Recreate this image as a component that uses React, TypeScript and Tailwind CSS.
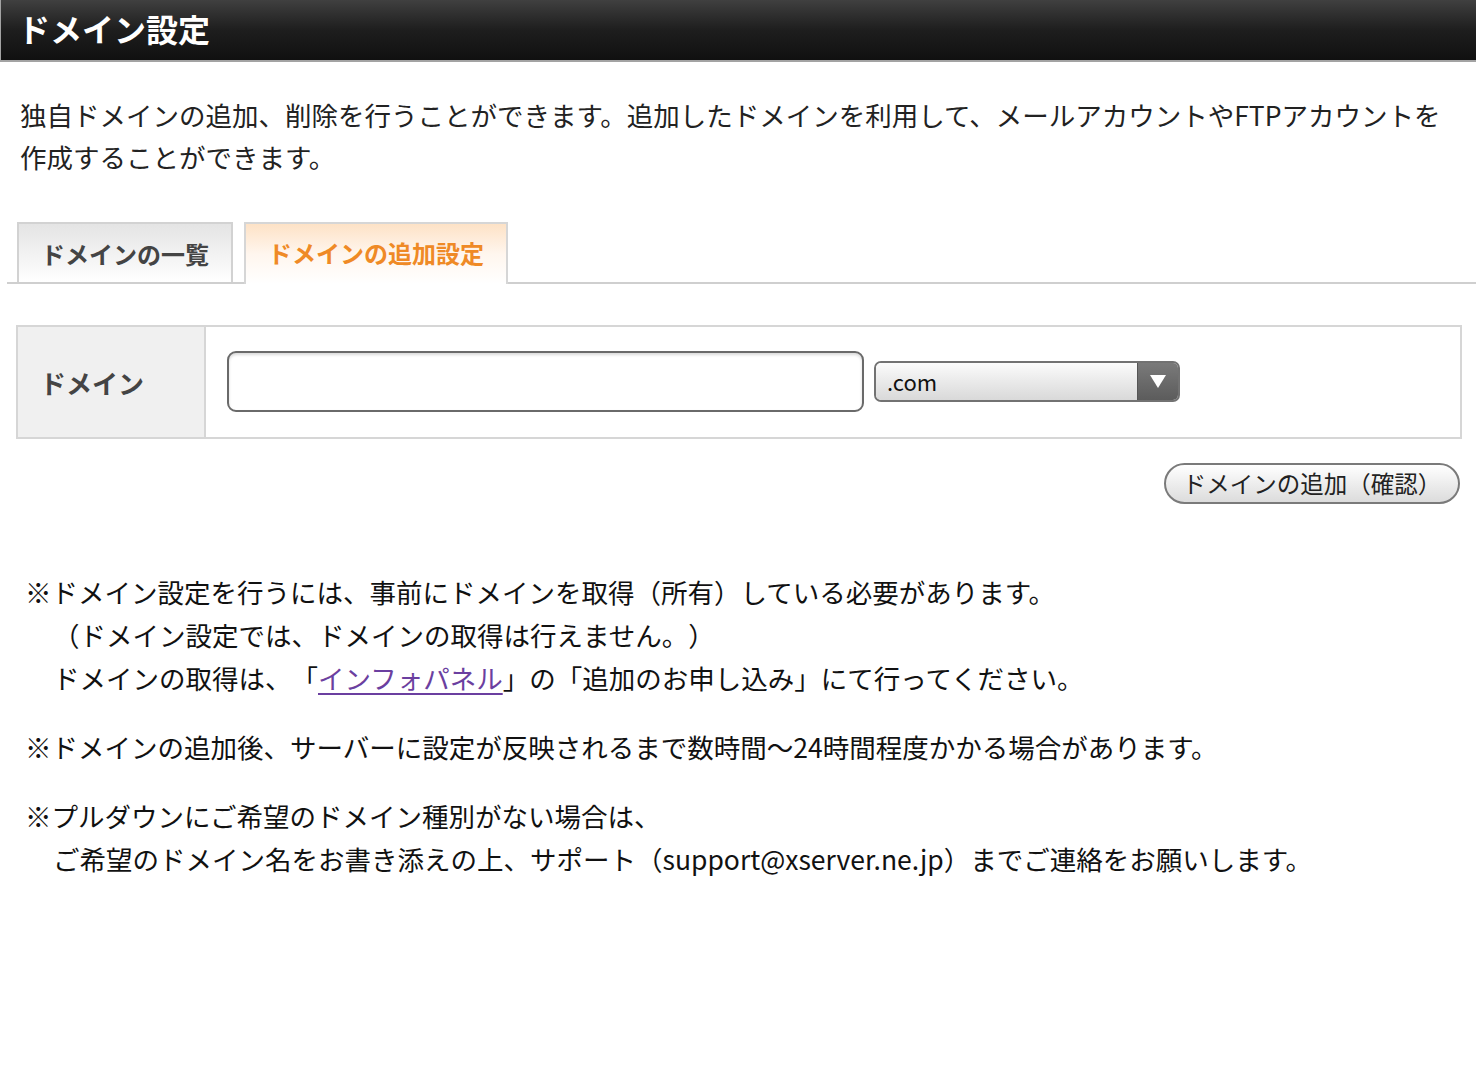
export default function App() {
    const jp = { fontFamily: '"Noto Sans CJK JP", "Noto Sans", sans-serif' };

    return (
        <div className="min-h-[1072px] w-[1476px] bg-white text-[#1a1a1a] [text-spacing-trim:space-all]" style={jp}>
            {/* header */}
            <div className="h-[62px] border-b-2 border-l border-[#a3a3a3] bg-gradient-to-b from-[#404040] via-[#1e1e1e] to-[#101010] pl-[17px] flex items-center">
                <h1 className="text-[32px] font-bold text-white leading-none pb-[4px]">ドメイン設定</h1>
            </div>

            {/* intro */}
            <p className="pl-[20px] pr-[20px] pt-[32px] text-[26.5px] leading-[42px] text-[#222]">
                独自ドメインの追加、削除を行うことができます。追加したドメインを利用して、メールアカウントやFTPアカウントを<br />作成することができます。
            </p>

            {/* tabs */}
            <div className="mt-[46px] ml-[7px] flex items-end border-b-2 border-[#cfcfcf] h-[60px]">
                <div className="ml-[10px] h-[60px] w-[216px] border-2 border-b-0 border-[#d2d2d2] bg-gradient-to-b from-[#e4e4e4] to-white flex items-center justify-center">
                    <span className="text-[24px] font-bold text-[#444] pt-[2px]">ドメインの一覧</span>
                </div>
                <div className="ml-[11px] -mb-[2px] h-[62px] w-[264px] border-2 border-b-0 border-[#d6d6d6] bg-gradient-to-b from-[#fde2c6] via-[#fff6ee] to-white flex items-center justify-center">
                    <span className="text-[24px] font-bold text-[#ef8a26] pb-[2px]">ドメインの追加設定</span>
                </div>
            </div>

            {/* form table */}
            <div className="mt-[41px] ml-[16px] w-[1446px] h-[114px] border-2 border-[#d6d6d6] flex">
                <div className="w-[188px] bg-[#f0f0f0] border-r-2 border-[#d6d6d6] flex items-center pl-[22px]">
                    <span className="text-[26px] font-bold text-[#444]">ドメイン</span>
                </div>
                <div className="flex-1 flex items-start pl-[21px] pt-[24px]">
                    <input
                        type="text"
                        className="w-[637px] h-[61px] rounded-[9px] border-2 border-[#6a6a6a] bg-white shadow-[inset_0_2px_3px_rgba(0,0,0,0.15)] outline-none"
                    />
                    <div className="ml-[10px] mt-[10px] w-[306px] h-[41px] rounded-[7px] border-2 border-[#727272] overflow-hidden flex">
                        <div className="flex-1 bg-gradient-to-b from-[#fbfbfb] to-[#d9d9d9] flex items-center pl-[11px]">
                            <span className="text-[22px] text-[#111]">.com</span>
                        </div>
                        <div className="w-[41px] bg-gradient-to-b from-[#7a7a7a] to-[#5c5c5c] border-l border-[#555] flex items-center justify-center">
                            <svg width="18" height="15" viewBox="0 0 18 15">
                                <path d="M1 1 H17 L9 14 Z" fill="#fff" />
                            </svg>
                        </div>
                    </div>
                </div>
            </div>

            {/* confirm button */}
            <div className="flex justify-end pr-[16px] mt-[24px]">
                <button className="w-[296px] h-[41px] rounded-full border-2 border-[#7a7a7a] bg-gradient-to-b from-white to-[#dcdcdc] text-[23.5px] text-[#222] flex items-center justify-center">
                    ドメインの追加（確認）
                </button>
            </div>

            {/* notes */}
            <div className="mt-[66px] pl-[25px] text-[26.5px] leading-[43px] text-[#111]">
                <p>※ドメイン設定を行うには、事前にドメインを取得（所有）している必要があります。</p>
                <p className="pl-[28px]">（ドメイン設定では、ドメインの取得は行えません。）</p>
                <p className="pl-[28px]">
                    ドメインの取得は、「<a href="#" className="text-[#6b3fa0] underline underline-offset-[4px]">インフォパネル</a>」の「追加のお申し込み」にて行ってください。
                </p>
                <p className="mt-[26px]">※ドメインの追加後、サーバーに設定が反映されるまで数時間〜24時間程度かかる場合があります。</p>
                <p className="mt-[26px]">※プルダウンにご希望のドメイン種別がない場合は、</p>
                <p className="pl-[28px]">ご希望のドメイン名をお書き添えの上、サポート（support@xserver.ne.jp）までご連絡をお願いします。</p>
            </div>
        </div>
    )
}
